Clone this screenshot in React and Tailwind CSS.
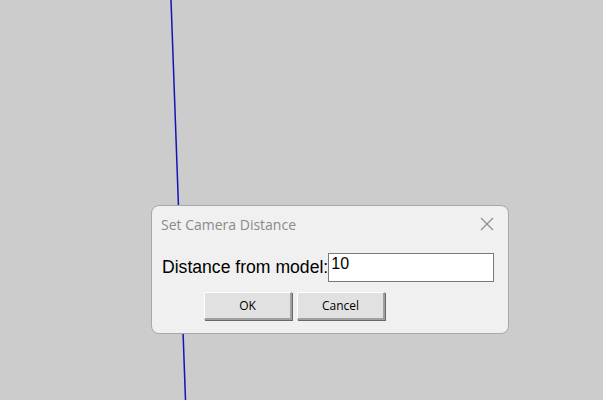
export default function App() {
  return (
    <div className="relative w-[603px] h-[400px] overflow-hidden bg-[#cccccc]">
      <svg className="absolute inset-0" width="603" height="400">
        <line x1="171" y1="0" x2="185.5" y2="400" stroke="#1414b4" strokeWidth="1.5" />
      </svg>
      <div className="relative pt-[205px] pl-[151px]">
        <div className="w-[358px] h-[129px] rounded-[8px] border border-[#a8a8a8] bg-[#f0f0f0] flex flex-col">
          <div className="h-[36px] flex items-center justify-between pl-[9px] pr-[14px]">
            <span className="text-[14px] text-[#8a8a8a]" style={{ fontFamily: '"Open Sans", sans-serif' }}>
              Set Camera Distance
            </span>
            <svg width="14" height="14" viewBox="0 0 14 14">
              <path d="M1 1 L13 13 M13 1 L1 13" stroke="#8a8a8a" strokeWidth="1.1" fill="none" />
            </svg>
          </div>
          <div className="mt-[11px] flex items-center pl-[10px]" style={{ fontFamily: '"Liberation Sans", Arial, sans-serif' }}>
            <span className="text-[17.6px] text-black leading-none">Distance from model:</span>
            <div className="w-[166px] h-[29px] border border-[#7a7a7a] bg-white pl-[2px] flex items-start">
              <span className="text-[16px] leading-[18px] text-black mt-[1px]">10</span>
            </div>
          </div>
          <div className="mt-[10px] flex gap-[5px] pl-[52px]" style={{ fontFamily: '"Open Sans", sans-serif' }}>
            <button className="w-[88px] h-[28px] bg-[#e1e1e1] border-t border-l border-t-white border-l-white border-b-2 border-r-2 border-b-[#a0a0a0] border-r-[#a0a0a0] shadow-[1px_1px_0_#696969] text-[12px] text-black flex items-center justify-center">
              OK
            </button>
            <button className="w-[88px] h-[28px] bg-[#e1e1e1] border-t border-l border-t-white border-l-white border-b-2 border-r-2 border-b-[#a0a0a0] border-r-[#a0a0a0] shadow-[1px_1px_0_#696969] text-[12px] text-black flex items-center justify-center">
              Cancel
            </button>
          </div>
        </div>
      </div>
    </div>
  );
}
